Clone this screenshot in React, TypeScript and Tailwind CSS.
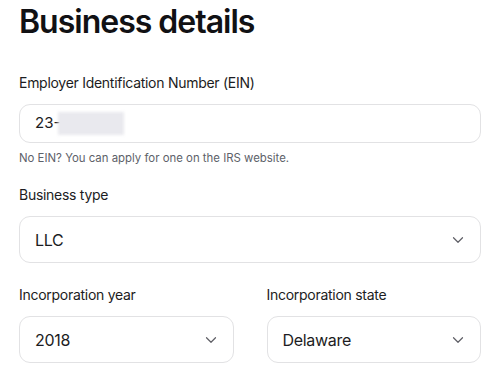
import { ChevronDown } from "lucide-react";

const font = { fontFamily: "Inter, 'Noto Sans', sans-serif" };

function Label({ children }: { children: React.ReactNode }) {
  return <label className="block text-[14px] leading-[20px] tracking-[-0.28px] text-[#1c1c22]">{children}</label>;
}

function Select({ value }: { value: string }) {
  return (
    <div className="flex items-center justify-between h-[47px] rounded-[11px] border border-[#e2e2e4] bg-white pl-[15px] pr-[13px]">
      <span className="text-[16px] tracking-[-0.3px] text-[#1c1c22]">{value}</span>
      <ChevronDown className="w-[18px] h-[18px] text-[#5f5f66]" strokeWidth={1.6} />
    </div>
  );
}

export default function App() {
  return (
    <div style={font} className="bg-white min-h-screen pl-[19px] pt-[2px] w-[481px]">
      <h1 className="text-[32px] leading-[40px] font-semibold tracking-[-1px] text-[#111114]">Business details</h1>

      <div className="mt-[31px]">
        <Label>Employer Identification Number (EIN)</Label>
        <div className="mt-[11px] flex items-center h-[39px] rounded-[11px] border border-[#e2e2e4] pl-[15px]">
          <span className="text-[15px] text-[#1c1c22]">23-</span>
          <span className="ml-[-2px] h-[23px] w-[66px] bg-[#e9e9ee] blur-[1.5px]" />
        </div>
        <p className="mt-[7px] text-[11.4px] leading-[16px] text-[#5d6169]">
          No EIN? You can apply for one on the IRS website.
        </p>
      </div>

      <div className="mt-[19px]">
        <Label>Business type</Label>
        <div className="mt-[11px]">
          <Select value="LLC" />
        </div>
      </div>

      <div className="mt-[22px] grid grid-cols-2 gap-[33px]">
        <div>
          <Label>Incorporation year</Label>
          <div className="mt-[11px]">
            <Select value="2018" />
          </div>
        </div>
        <div>
          <Label>Incorporation state</Label>
          <div className="mt-[11px]">
            <Select value="Delaware" />
          </div>
        </div>
      </div>
    </div>
  );
}
